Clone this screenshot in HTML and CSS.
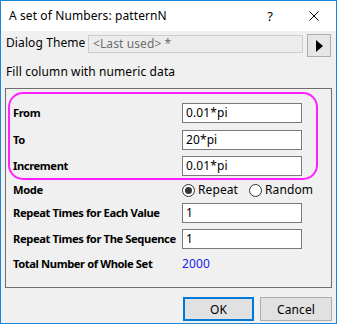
FILE: index.html
```html
<!DOCTYPE html>
<html lang="en">
<head>
<meta charset="utf-8">
<title>A set of Numbers: patternN</title>
<link rel="stylesheet" href="styles.css">
</head>
<body>
<div class="window">
    <div class="titlebar">
        <span class="title">A set of Numbers: patternN</span>
        <span class="help">?</span>
        <span class="close">
            <svg width="10" height="10" viewBox="0 0 10 10"><path d="M0.5 0.5L9.5 9.5M9.5 0.5L0.5 9.5" stroke="#000" stroke-width="1" fill="none"/></svg>
        </span>
    </div>
    <div class="body">
        <div class="theme-row">
            <span class="theme-label">Dialog Theme</span>
            <span class="combo">&lt;Last used&gt; *</span>
            <span class="arrow-btn"><span class="tri"></span></span>
        </div>
        <div class="caption">Fill column with numeric data</div>
        <div class="group">
            <div class="highlight">
                <div class="row"><label>From</label><span class="field">0.01*pi</span></div>
                <div class="row"><label>To</label><span class="field">20*pi</span></div>
                <div class="row"><label>Increment</label><span class="field">0.01*pi</span></div>
            </div>
            <div class="row mode">
                <label>Mode</label>
                <span class="radios">
                    <span class="radio checked"></span><span class="rlabel">Repeat</span>
                    <span class="radio second"></span><span class="rlabel">Random</span>
                </span>
            </div>
            <div class="row each"><label>Repeat Times for Each Value</label><span class="field">1</span></div>
            <div class="row seq"><label>Repeat Times for The Sequence</label><span class="field">1</span></div>
            <div class="row total"><label>Total Number of Whole Set</label><span class="value">2000</span></div>
        </div>
        <div class="buttons">
            <span class="btn default">OK</span>
            <span class="btn cancel">Cancel</span>
        </div>
    </div>
</div>
</body>
</html>
```
FILE: styles.css
```css
* {box-sizing: border-box;}
html, body {margin: 0; padding: 0; background: #fff;}
body {
    font-family: "Noto Sans", "Open Sans", sans-serif;
    font-size: 12px;
    letter-spacing: 0.1px;
    color: #000;
    white-space: nowrap;
}
.window {
    width: 337px;
    height: 324px;
    border: 1px solid #1c86d8;
    background: #f0f0f0;
    display: flex;
    flex-direction: column;
}
.titlebar {
    height: 30px;
    background: #fff;
    display: flex;
    align-items: center;
    padding-left: 8px;
}
.title {flex: 1; line-height: 16px;}
.help {width: 14px; text-align: center; font-size: 13px; margin-right: 32px;}
.close {width: 10px; height: 10px; margin-right: 17px; display: flex;}

.body {
    flex: 1;
    display: flex;
    flex-direction: column;
}
.theme-row {
    display: flex;
    align-items: flex-start;
    margin-top: 3px;
    height: 23px;
}
.theme-label {
    width: 87px;
    padding-left: 5px;
    line-height: 16px;
    margin-top: 1px;
}
.combo {
    width: 215px;
    height: 18px;
    margin-top: 1px;
    border: 1px solid #cccccc;
    background: #ececec;
    color: #6d6d6d;
    line-height: 16px;
    padding-left: 4px;
}
.arrow-btn {
    width: 24px;
    height: 23px;
    margin-left: 4px;
    border: 1px solid #adadad;
    background: #e6e6e6;
    display: flex;
    align-items: center;
    justify-content: center;
}
.tri {
    width: 0;
    height: 0;
    border-top: 6px solid transparent;
    border-bottom: 6px solid transparent;
    border-left: 7px solid #000;
}
.caption {
    margin-top: 7px;
    padding-left: 5px;
    line-height: 16px;
}
.group {
    margin: 8px 0 0 4px;
    width: 327px;
    height: 200px;
    border: 1px solid #6e6e6e;
    display: flex;
    flex-direction: column;
}
.highlight {
    margin: 3px 0 0 2px;
    width: 310px;
    height: 88px;
    border: 2px solid #ff1fff;
    border-radius: 15px;
    padding: 9px 0 0 3px;
    display: flex;
    flex-direction: column;
    gap: 6.5px;
}
.row {
    display: flex;
    align-items: center;
}
.row label {
    width: 169px;
    line-height: 16px;
    font-weight: bold;
    font-size: 11.2px;
    letter-spacing: -0.4px;
}
.group > .row {padding-left: 7px;}
.field {
    width: 120px;
    height: 20px;
    border: 1px solid #7a7a7a;
    background: #fff;
    line-height: 18px;
    padding-left: 3px;
}
.mode {margin-top: 1px; height: 18px;}
.radios {display: flex; align-items: center;}
.radio {
    width: 13px;
    height: 13px;
    border: 1px solid #333;
    border-radius: 50%;
    background: #fff;
    display: flex;
    align-items: center;
    justify-content: center;
}
.radio.checked::after {
    content: "";
    width: 7px;
    height: 7px;
    border-radius: 50%;
    background: #333;
}
.radio.second {margin-left: 11px;}
.rlabel {margin-left: 3px; line-height: 16px;}
.each {margin-top: 4px;}
.seq {margin-top: 6px;}
.total {margin-top: 7px;}
.value {color: #2222e6; line-height: 16px;}

.buttons {
    display: flex;
    justify-content: flex-end;
    gap: 6px;
    margin-top: 9px;
    padding-right: 4px;
}
.btn {
    height: 24px;
    background: #e1e1e1;
    border: 1px solid #adadad;
    display: flex;
    align-items: center;
    justify-content: center;
}
.btn.default {width: 71px; border: 2px solid #0078d7;}
.btn.cancel {width: 72px;}
```
